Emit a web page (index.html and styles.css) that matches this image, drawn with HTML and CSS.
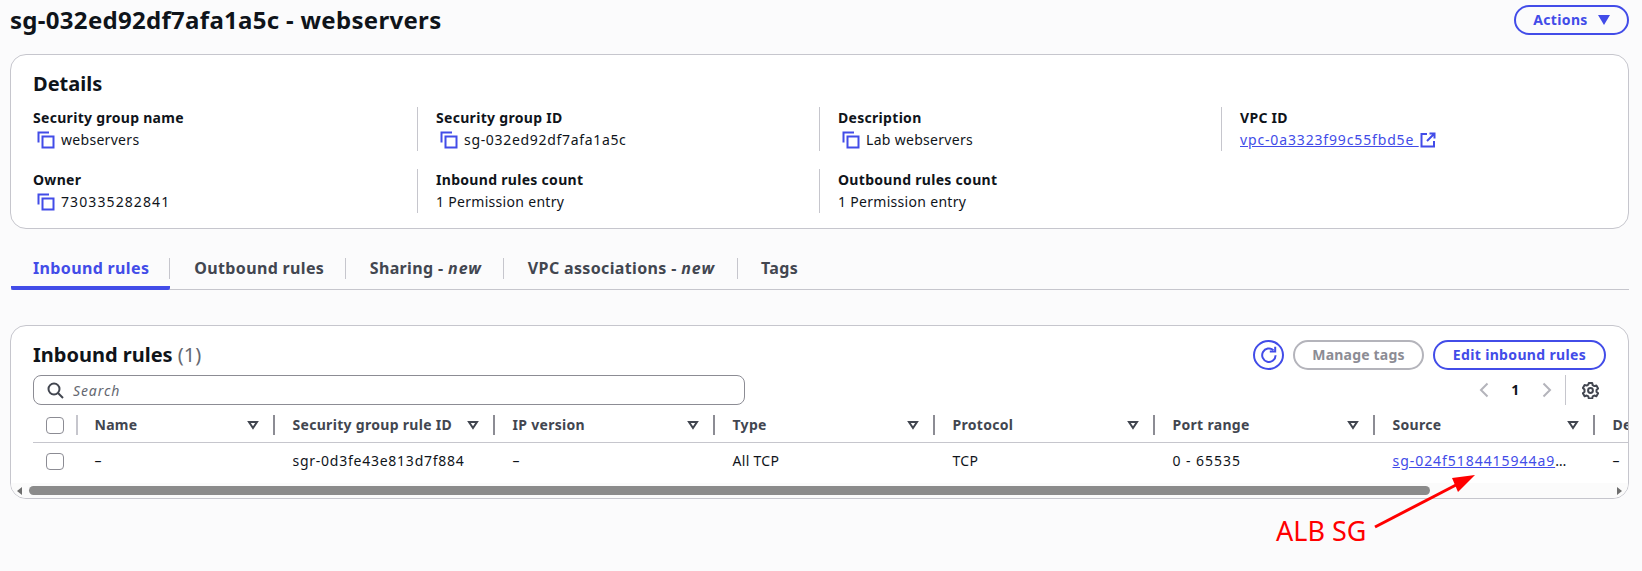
FILE: index.html
```html
<!DOCTYPE html>
<html lang="en">
<head>
<meta charset="utf-8">
<title>sg-032ed92df7afa1a5c - webservers</title>
<link rel="stylesheet" href="styles.css">
</head>
<body>
<svg class="defs" width="0" height="0" aria-hidden="true">
  <symbol id="copy" viewBox="0 0 18 18">
    <path d="M1.5 11.5V1.5H12" fill="none" stroke="currentColor" stroke-width="2"/>
    <rect x="5.5" y="5.5" width="11" height="11" fill="none" stroke="currentColor" stroke-width="2"/>
  </symbol>
  <symbol id="sort" viewBox="0 0 12 10">
    <path d="M2 2h8L6 8z" fill="none" stroke="currentColor" stroke-width="2" stroke-linejoin="miter"/>
  </symbol>
</svg>

<header class="page-head">
  <h1 class="page-title">sg-032ed92df7afa1a5c - webservers</h1>
  <button class="btn btn-actions">Actions
    <svg class="caret" width="12" height="10" viewBox="0 0 12 10"><path d="M0 0h12L6 10z" fill="currentColor"/></svg>
  </button>
</header>

<section class="card details">
  <h2 class="details-title">Details</h2>
  <div class="details-grid">
    <div class="kv"><div class="k">Security group name</div><div class="v"><svg class="copy"><use href="#copy"/></svg>webservers</div></div>
    <div class="kv sep"><div class="k">Security group ID</div><div class="v id-sg"><svg class="copy"><use href="#copy"/></svg>sg-032ed92df7afa1a5c</div></div>
    <div class="kv sep"><div class="k">Description</div><div class="v"><svg class="copy"><use href="#copy"/></svg>Lab webservers</div></div>
    <div class="kv sep"><div class="k">VPC ID</div><div class="v id-vpc"><a class="link" href="#">vpc-0a3323f99c55fbd5e </a><svg class="ext" width="16" height="16" viewBox="0 0 16 16"><path d="M7 2H1.5v12.5H14V9" fill="none" stroke="currentColor" stroke-width="2"/><path d="M9.5 1.5h5v5M14.5 1.5L7 9" fill="none" stroke="currentColor" stroke-width="2"/></svg></div></div>
    <div class="kv"><div class="k">Owner</div><div class="v id-owner"><svg class="copy"><use href="#copy"/></svg>730335282841</div></div>
    <div class="kv sep"><div class="k">Inbound rules count</div><div class="v">1 Permission entry</div></div>
    <div class="kv sep"><div class="k">Outbound rules count</div><div class="v">1 Permission entry</div></div>
  </div>
</section>

<nav class="tabs">
  <a class="tab active"><span>Inbound rules</span></a>
  <a class="tab outbound"><span>Outbound rules</span></a>
  <a class="tab"><span>Sharing - <em>new</em></span></a>
  <a class="tab"><span>VPC associations - <em>new</em></span></a>
  <a class="tab last"><span>Tags</span></a>
</nav>

<section class="card rules">
  <div class="rules-head">
    <h2 class="rules-title">Inbound rules <span class="count">(1)</span></h2>
    <div class="actions">
      <button class="btn btn-icon" aria-label="Refresh">
        <svg width="18" height="18" viewBox="0 0 18 18"><path d="M15.6 9.2a6.7 6.7 0 1 1-2.2-5" fill="none" stroke="currentColor" stroke-width="2"/><path d="M9.8 5.6h5.4V0.8" fill="none" stroke="currentColor" stroke-width="2"/></svg>
      </button>
      <button class="btn btn-disabled">Manage tags</button>
      <button class="btn btn-edit">Edit inbound rules</button>
    </div>
  </div>
  <div class="rules-tools">
    <div class="search">
      <svg width="17" height="17" viewBox="0 0 17 17"><circle cx="7" cy="7" r="5.5" fill="none" stroke="currentColor" stroke-width="2"/><path d="M11 11l5 5" stroke="currentColor" stroke-width="2"/></svg>
      <span class="search-text">Search</span>
    </div>
    <div class="pager">
      <svg class="chev" width="10" height="16" viewBox="0 0 10 16"><path d="M8.5 1.5L2 8l6.500 6.500" fill="none" stroke="currentColor" stroke-width="2"/></svg>
      <span class="page-num">1</span>
      <svg class="chev" width="10" height="16" viewBox="0 0 10 16"><path d="M1.500 1.500L8 8l-6.500 6.500" fill="none" stroke="currentColor" stroke-width="2"/></svg>
      <span class="pager-sep"></span>
      <svg class="gear" width="17" height="17" viewBox="0 0 17 17"><path d="M6.800 1h3.400l.5 2.200 1.600.9 2.100-.7 1.700 3-1.600 1.500v1.800l1.600 1.500-1.700 3-2.100-.7-1.600.9-.5 2.200H6.800l-.5-2.200-1.600-.9-2.100.7-1.700-3 1.600-1.500V7.400L.9 5.900l1.700-3 2.100.7 1.600-.9z" fill="none" stroke="currentColor" stroke-width="2" stroke-linejoin="round"/><circle cx="8.500" cy="8.500" r="2.400" fill="none" stroke="currentColor" stroke-width="2"/></svg>
    </div>
  </div>
  <div class="table-clip">
    <div class="row row-head">
      <div class="cell cell-check"><span class="checkbox"></span><span class="sep-light"></span></div>
      <div class="cell"><span class="th">Name</span><svg class="sort"><use href="#sort"/></svg><span class="col-sep"></span></div>
      <div class="cell"><span class="th">Security group rule ID</span><svg class="sort"><use href="#sort"/></svg><span class="col-sep"></span></div>
      <div class="cell"><span class="th">IP version</span><svg class="sort"><use href="#sort"/></svg><span class="col-sep"></span></div>
      <div class="cell"><span class="th">Type</span><svg class="sort"><use href="#sort"/></svg><span class="col-sep"></span></div>
      <div class="cell"><span class="th">Protocol</span><svg class="sort"><use href="#sort"/></svg><span class="col-sep"></span></div>
      <div class="cell"><span class="th">Port range</span><svg class="sort"><use href="#sort"/></svg><span class="col-sep"></span></div>
      <div class="cell"><span class="th">Source</span><svg class="sort"><use href="#sort"/></svg><span class="col-sep"></span></div>
      <div class="cell"><span class="th">Description</span></div>
    </div>
    <div class="row row-body">
      <div class="cell cell-check"><span class="checkbox"></span></div>
      <div class="cell">–</div>
      <div class="cell id-sgr">sgr-0d3fe43e813d7f884</div>
      <div class="cell">–</div>
      <div class="cell">All TCP</div>
      <div class="cell">TCP</div>
      <div class="cell id-num">0 - 65535</div>
      <div class="cell id-src"><a class="link" href="#">sg-024f5184415944a9</a>…</div>
      <div class="cell">–</div>
    </div>
  </div>
  <div class="scrollbar">
    <svg class="sb-arrow" width="5" height="8" viewBox="0 0 5 8"><path d="M5 0v8L0 4z" fill="currentColor"/></svg>
    <span class="sb-thumb"></span>
    <svg class="sb-arrow" width="5" height="8" viewBox="0 0 5 8"><path d="M0 0v8l5-4z" fill="currentColor"/></svg>
  </div>
</section>

<svg class="note-arrow" width="120" height="70" viewBox="0 0 120 70"><path d="M5 57L86 15" stroke="#ff0000" stroke-width="3" fill="none"/><path d="M105 5L82 8 88 22z" fill="#ff0000"/></svg>
<div class="note-text">ALB SG</div>
</body>
</html>
```
FILE: styles.css
```css
* { box-sizing: border-box; }
html, body { margin: 0; padding: 0; }
body {
  background: #fbfbfc;
  color: #0f141a;
  font-family: "Noto Sans", "Open Sans", sans-serif;
  font-size: 14px;
  line-height: 22px;
  letter-spacing: .3px;
  overflow: hidden;
  height: 571px;
}
.defs { position: absolute; }
h1, h2 { margin: 0; }

.page-head {
  display: flex;
  justify-content: space-between;
  align-items: flex-start;
  height: 54px;
  padding: 5px 13px 0 10px;
}
.page-title { font-size: 24px; line-height: 30px; font-weight: 700; letter-spacing: .3px; }

.btn {
  display: inline-flex;
  align-items: center;
  justify-content: center;
  height: 30px;
  padding: 0;
  border: 2px solid #424ce8;
  border-radius: 20px;
  background: #fff;
  color: #424ce8;
  font: 700 14px/22px "Noto Sans", "Open Sans", sans-serif;
  letter-spacing: .35px;
}
.btn-actions { width: 115px; gap: 10px; background: #fbfbfc; }
.btn-disabled { border-color: #b4b4bb; color: #8c8c94; width: 131px; letter-spacing: .2px; }
.btn-edit { width: 173px; }
.btn-icon { width: 31px; border-radius: 50%; }

.card {
  background: #fff;
  border: 1px solid #c6c6cd;
  border-radius: 16px;
  margin: 0 13px 0 10px;
}
.details { height: 175px; padding: 17px 0 0 22px; }
.details-title { font-size: 20px; line-height: 24px; font-weight: 700; margin-bottom: 11px; letter-spacing: 0; }
.details-grid {
  display: grid;
  grid-template-columns: 384px 402px 402px 1fr;
  grid-auto-rows: 44px;
  row-gap: 18px;
}
.kv.sep { border-left: 1px solid #c6c6cd; padding-left: 18px; }
.k { font-weight: 700; }
.v { display: flex; align-items: center; }
.id-sg { letter-spacing: .68px; }
.id-vpc { letter-spacing: .85px; }
.id-num { letter-spacing: .95px; }
.id-owner { letter-spacing: 1.1px; }
.id-sgr { letter-spacing: .75px; }
.id-src { letter-spacing: .95px; }
.copy { width: 18px; height: 18px; color: #424ce8; margin: 0 6px 0 4px; flex: none; }
.link { color: #424ce8; text-decoration: underline; white-space: pre; }
.ext { color: #424ce8; margin-left: 1px; }

.tabs {
  display: flex;
  height: 43px;
  margin: 18px 13px 0 11px;
  padding-top: 11px;
  border-bottom: 1px solid #c6c6cd;
}
.tab {
  height: 32px;
  padding: 0 0 0 1px;
  font-size: 16px;
  font-weight: 700;
  letter-spacing: .35px;
  color: #424650;
}
.tab span {
  display: block;
  height: 21px;
  line-height: 21px;
  padding: 0 21.500px 0 22.500px;
  border-right: 1px solid #c6c6cd;
}
.tab.last span { border-right: 0; }
.tab.outbound span { padding: 0 21px 0 23px; }
.tab.active { color: #424ce8; border-bottom: 4px solid #424ce8; border-radius: 2px; }
.tab.active span { padding-left: 21px; padding-right: 20px; }
.tab em { font-style: italic; letter-spacing: 1px; }

.rules { margin-top: 35px; height: 174px; padding-top: 14px; overflow: hidden; }
.rules-head, .rules-tools {
  display: flex;
  justify-content: space-between;
  padding: 0 22px;
}
.rules-head { height: 30px; align-items: center; }
.rules-title { font-size: 20px; line-height: 26px; font-weight: 700; letter-spacing: 0; }
.count { font-weight: 400; color: #656871; }
.actions { display: flex; gap: 9px; }
.rules-tools { height: 30px; margin-top: 5px; }
.search {
  display: flex;
  align-items: center;
  gap: 9px;
  width: 712px;
  height: 30px;
  padding-left: 13px;
  background: #fff;
  border: 1px solid #8c8c94;
  border-radius: 8px;
  color: #424650;
}
.search-text { font-style: italic; color: #656871; padding-top: 1px; letter-spacing: .9px; }
.pager { display: flex; align-items: center; color: #424650; }
.chev { color: #b4b4bb; }
.page-num { font-weight: 700; color: #0f141a; width: 53px; text-align: center; }
.pager-sep { width: 1px; height: 30px; background: #c6c6cd; margin: 0 16px 0 13px; }
.gear { margin-right: 7px; }

.table-clip { margin: 0 0 0 22px; overflow: hidden; }
.row {
  display: grid;
  grid-template-columns: 44px 198px repeat(7, 220px);
  width: max-content;
}
.row-head {
  height: 38px;
  padding-top: 3px;
  border-bottom: 1px solid #c6c6cd;
  font-weight: 700;
  color: #424650;
}
.row-body { height: 40px; padding-top: 7px; }
.cell { display: flex; align-items: center; padding-left: 17.500px; height: 22px; white-space: nowrap; }
.row-head .cell { height: 34px; }
.cell-check { padding-left: 13px; }
.th { flex: 1; }
.sort { width: 12px; height: 10px; color: #424650; flex: none; margin-right: 14px; }
.col-sep { width: 2px; height: 20px; background: #8c8c94; flex: none; }
.sep-light { width: 2px; height: 20px; background: #c6c6cd; margin-left: 12px; flex: none; }
.checkbox {
  display: block;
  width: 18px;
  height: 17px;
  border: 1px solid #8c8c94;
  border-radius: 4px;
  background: #fff;
  flex: none;
}

.scrollbar {
  display: flex;
  align-items: center;
  height: 15px;
  padding: 0 6px;
  background: #fbfbfb;
  color: #6e6e6e;
}
.sb-thumb { display: block; width: 1401px; height: 9px; border-radius: 5px; background: #8b8b8b; margin: 0 auto 0 7px; }

.note-arrow { position: absolute; left: 1370px; top: 470px; }
.note-text {
  position: absolute;
  left: 1276px;
  top: 514px;
  font-size: 27px;
  line-height: 34px;
  letter-spacing: 0;
  color: #ff0000;
}
```
